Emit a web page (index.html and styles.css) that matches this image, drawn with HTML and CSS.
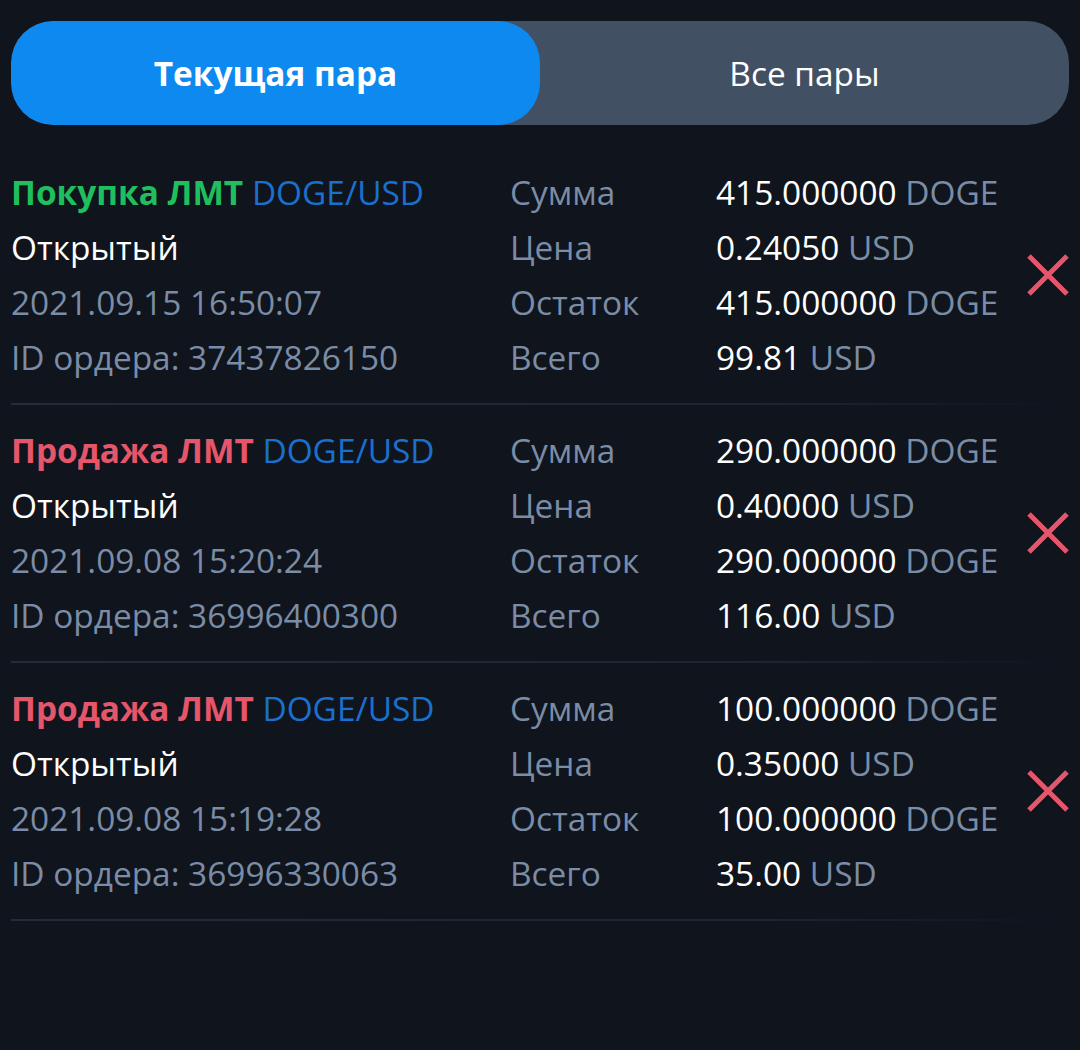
FILE: index.html
```html
<!DOCTYPE html>
<html lang="ru">

<head>
    <meta charset="UTF-8">
    <meta name="viewport" content="width=device-width, initial-scale=1.0">
    <title>Открытые ордера</title>
    <link rel="stylesheet" href="styles.css">
</head>

<body>
    <div class="tabs">
        <div class="tab active">Текущая пара</div>
        <div class="tab">Все пары</div>
    </div>

    <div class="orders">
        <div class="order">
            <div class="info">
                <div><span class="side buy">Покупка ЛМТ</span> <span class="pair">DOGE/USD</span></div>
                <div class="status">Открытый</div>
                <div class="muted">2021.09.15 16:50:07</div>
                <div class="muted">ID ордера: 37437826150</div>
            </div>
            <div class="labels">
                <div>Сумма</div>
                <div>Цена</div>
                <div>Остаток</div>
                <div>Всего</div>
            </div>
            <div class="values">
                <div>415.000000 <span class="unit">DOGE</span></div>
                <div>0.24050 <span class="unit">USD</span></div>
                <div>415.000000 <span class="unit">DOGE</span></div>
                <div>99.81 <span class="unit">USD</span></div>
            </div>
            <button class="cancel" aria-label="Отменить">
                <svg viewBox="0 0 44 44" width="44" height="44">
                    <path d="M3 3 L41 41 M41 3 L3 41" stroke="#e5556b" stroke-width="5" fill="none" />
                </svg>
            </button>
        </div>

        <div class="order">
            <div class="info">
                <div><span class="side sell">Продажа ЛМТ</span> <span class="pair">DOGE/USD</span></div>
                <div class="status">Открытый</div>
                <div class="muted">2021.09.08 15:20:24</div>
                <div class="muted">ID ордера: 36996400300</div>
            </div>
            <div class="labels">
                <div>Сумма</div>
                <div>Цена</div>
                <div>Остаток</div>
                <div>Всего</div>
            </div>
            <div class="values">
                <div>290.000000 <span class="unit">DOGE</span></div>
                <div>0.40000 <span class="unit">USD</span></div>
                <div>290.000000 <span class="unit">DOGE</span></div>
                <div>116.00 <span class="unit">USD</span></div>
            </div>
            <button class="cancel" aria-label="Отменить">
                <svg viewBox="0 0 44 44" width="44" height="44">
                    <path d="M3 3 L41 41 M41 3 L3 41" stroke="#e5556b" stroke-width="5" fill="none" />
                </svg>
            </button>
        </div>

        <div class="order">
            <div class="info">
                <div><span class="side sell">Продажа ЛМТ</span> <span class="pair">DOGE/USD</span></div>
                <div class="status">Открытый</div>
                <div class="muted">2021.09.08 15:19:28</div>
                <div class="muted">ID ордера: 36996330063</div>
            </div>
            <div class="labels">
                <div>Сумма</div>
                <div>Цена</div>
                <div>Остаток</div>
                <div>Всего</div>
            </div>
            <div class="values">
                <div>100.000000 <span class="unit">DOGE</span></div>
                <div>0.35000 <span class="unit">USD</span></div>
                <div>100.000000 <span class="unit">DOGE</span></div>
                <div>35.00 <span class="unit">USD</span></div>
            </div>
            <button class="cancel" aria-label="Отменить">
                <svg viewBox="0 0 44 44" width="44" height="44">
                    <path d="M3 3 L41 41 M41 3 L3 41" stroke="#e5556b" stroke-width="5" fill="none" />
                </svg>
            </button>
        </div>
    </div>
</body>

</html>
```

FILE: styles.css
```css
body {
    margin: 0;
    padding: 21px 11px 0;
    background-color: #0f141d;
    font-family: "Open Sans", "Noto Sans", sans-serif;
    color: #fff;
    height: 1050px;
    box-sizing: border-box;
}

.tabs {
    display: flex;
    height: 104px;
    background-color: #425063;
    border-radius: 42px;
    overflow: hidden;
}

.tab {
    flex: 1;
    display: flex;
    align-items: center;
    justify-content: center;
    font-size: 33.4px;
    color: #fff;
}

.tab.active {
    background-color: #0d89f0;
    border-radius: 42px;
    font-weight: 700;
}

.orders {
    margin-top: 22px;
}

.order {
    position: relative;
    display: grid;
    grid-template-columns: 499px 206px 1fr;
    padding: 18px 0;
    font-size: 33.4px;
    line-height: 55px;
    border-bottom: 2px solid transparent;
    border-image: linear-gradient(to right, #222c3a 0%, #1c2633 70%, #0f141d 100%) 1;
}

.side {
    font-weight: 700;
}

.buy {
    color: #1fbf5e;
}

.sell {
    color: #e5566b;
}

.pair {
    color: #1a70cc;
}

.status {
    color: #fff;
}

.muted,
.labels,
.unit {
    color: #7b8ca6;
}

.values {
    color: #fff;
}

.cancel {
    position: absolute;
    right: -1px;
    top: 50%;
    transform: translateY(-50%);
    background: none;
    border: none;
    padding: 0;
    cursor: pointer;
    display: flex;
}
```
